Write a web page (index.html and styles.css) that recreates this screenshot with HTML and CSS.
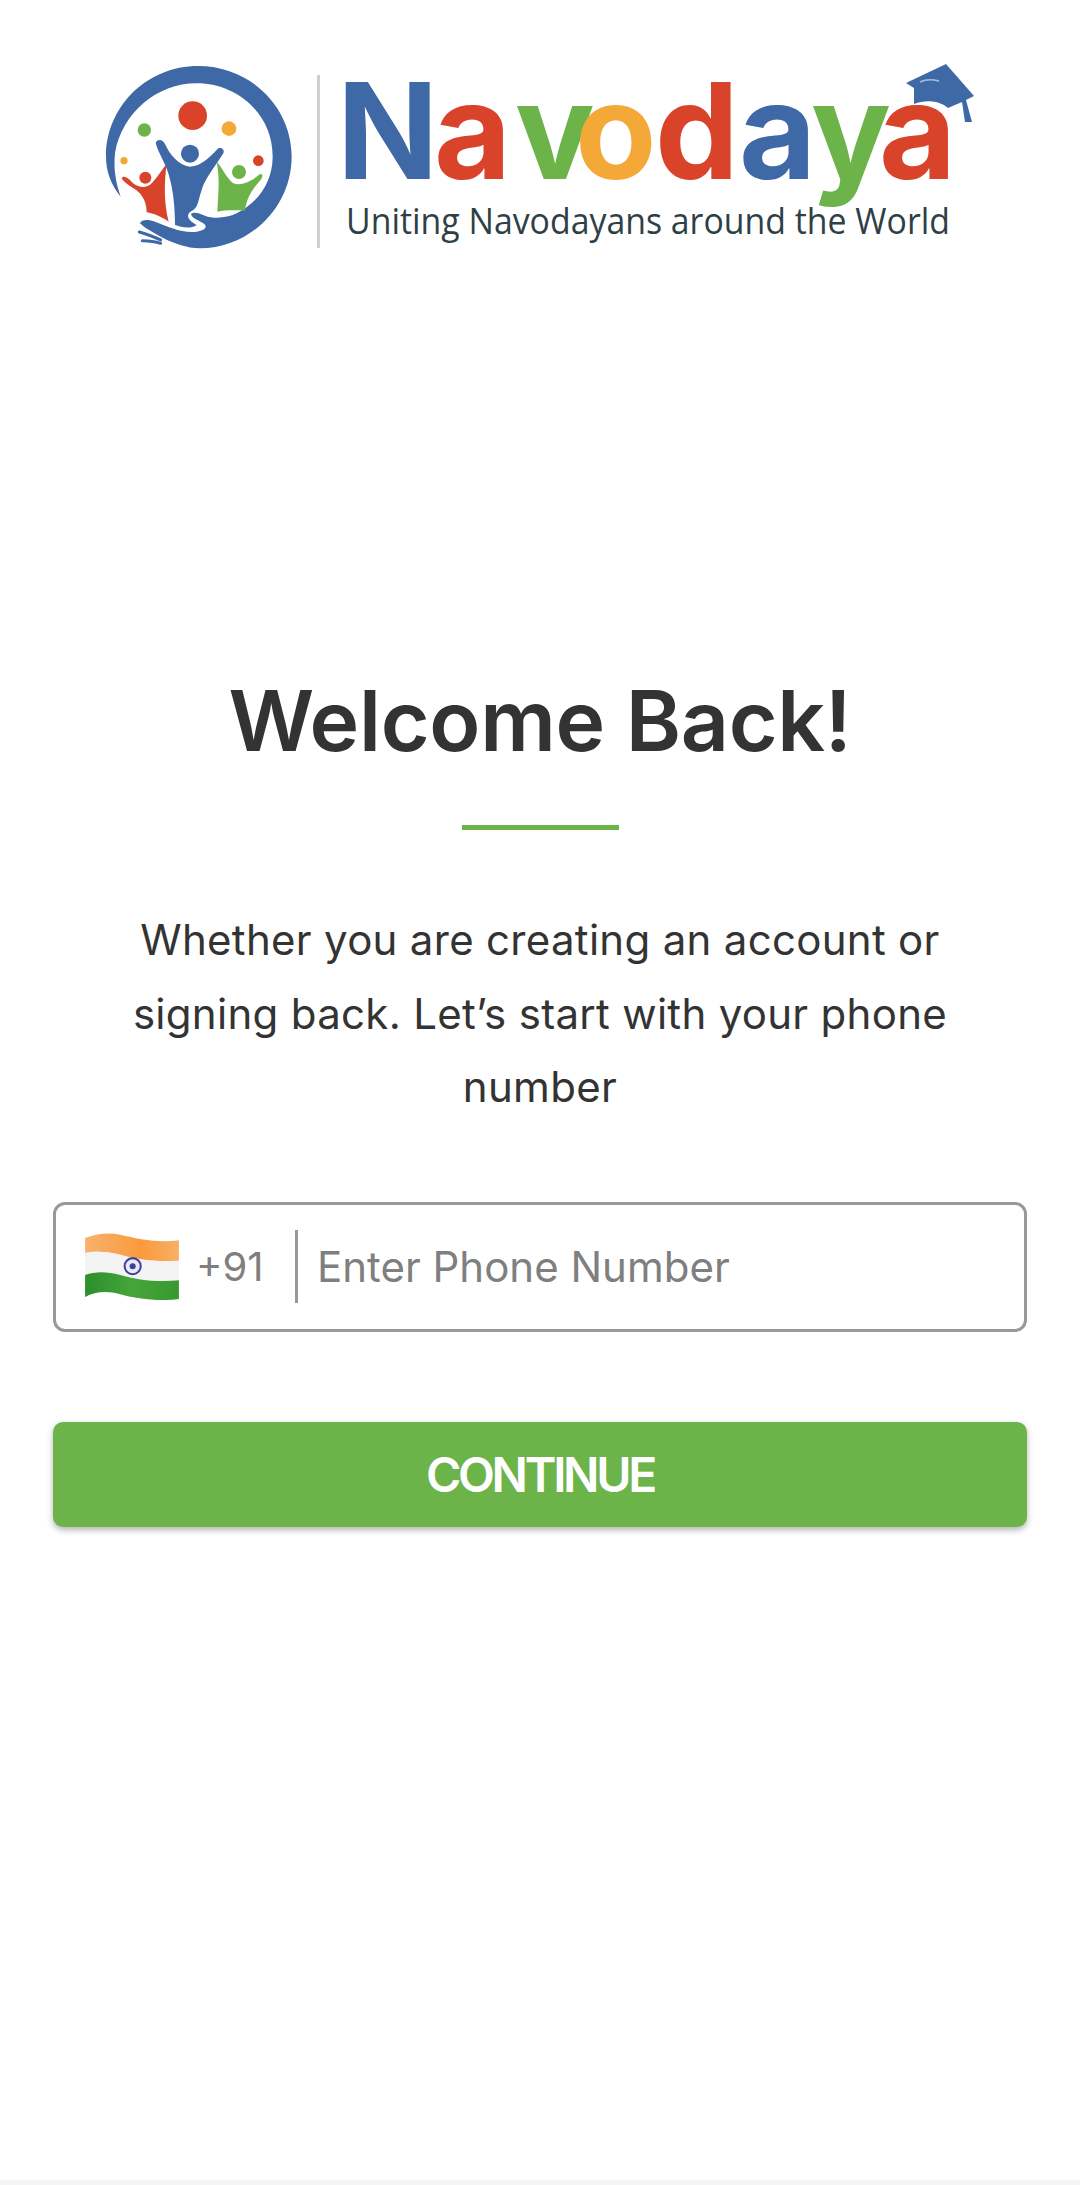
FILE: index.html
```html
<!DOCTYPE html>
<html lang="en">
<head>
    <meta charset="UTF-8">
    <meta name="viewport" content="width=device-width, initial-scale=1.0">
    <title>Navodaya - Welcome Back</title>
    <link rel="stylesheet" href="styles.css">
</head>
<body>

<div class="page">
    <svg class="logo" viewBox="90 50 900 210" role="img" aria-label="Navodaya logo">
        <!-- emblem, coordinates taken at 3x -->
        <g transform="translate(90 50) scale(0.3333)">
            <path fill="#3f68a6" d="M92 440C60 400 48 360 48 320C48 170 170 48 325 48C480 48 605 170 605 320C605 470 480 595 330 595C290 595 250 580 215 562C190 548 165 535 150 520C155 508 175 508 195 515C235 530 275 550 320 545C345 542 355 530 340 520C325 510 305 505 303 492C310 485 325 488 345 497C370 507 410 505 440 490C510 455 548 390 548 320C548 190 440 100 320 100C200 100 95 190 75 310C70 360 78 400 92 440Z"/>
            <path stroke="#3f68a6" stroke-width="9" stroke-linecap="round" fill="none" d="M148 546C170 552 190 560 212 570M157 572C175 572 195 574 212 580"/>
            <circle cx="308" cy="197" r="43" fill="#d8432a"/>
            <circle cx="163" cy="240" r="20" fill="#6cb34a"/>
            <circle cx="417" cy="236" r="22" fill="#f3a838"/>
            <circle cx="102" cy="332" r="11" fill="#f3a838"/>
            <circle cx="505" cy="332" r="16" fill="#d8432a"/>
            <circle cx="447" cy="366" r="21" fill="#6cb34a"/>
            <circle cx="166" cy="383" r="18" fill="#d8432a"/>
            <circle cx="300" cy="311" r="27" fill="#3f68a6"/>
            <path fill="#d8432a" d="M95 385C100 375 110 382 120 390C135 410 165 420 185 400C200 385 215 360 230 342C222 400 222 460 236 515C215 500 190 490 170 487C170 450 150 425 130 415C115 405 100 395 95 385Z"/>
            <path fill="#6cb34a" d="M380 335C395 350 410 385 430 400C455 410 490 390 510 372C520 370 520 382 510 392C490 415 470 440 465 482C435 480 405 480 382 485C385 430 390 385 380 335Z"/>
            <path fill="#3f68a6" d="M197 278C205 265 218 270 225 282C240 315 265 345 300 350C335 350 365 315 385 295C395 290 405 300 400 310C375 350 345 385 335 420C325 450 325 470 310 480C290 490 285 505 320 525C300 540 270 530 255 525C255 470 250 420 235 370C225 335 205 310 197 278Z"/>
        </g>
        <rect x="317" y="75" width="3" height="173" fill="#cfcfcf"/>
        <!-- wordmark -->
        <text class="logo-word" y="179">
            <tspan x="337" fill="#3f68a6">N</tspan><tspan x="434" fill="#d8432a">a</tspan><tspan x="515" fill="#6cb34a">v</tspan><tspan x="575" fill="#f3a838">o</tspan><tspan x="655" fill="#d8432a">d</tspan><tspan x="739" fill="#3f68a6">a</tspan><tspan x="811" fill="#6cb34a">y</tspan><tspan x="879" fill="#d8432a">a</tspan>
        </text>
        <text class="logo-tag" x="346" y="234" textLength="604" lengthAdjust="spacingAndGlyphs">Uniting Navodayans around the World</text>
        <!-- graduation cap -->
        <path fill="#3f68a6" d="M906 83L946 64L974 96L966 100L972 122L965 122L962 102L948 108C938 100 925 100 914 104L914 88Z"/>
        <path fill="none" stroke="#a9bedb" stroke-width="1.5" d="M920 82C926 79 932 79 939 81"/>
    </svg>

    <main class="welcome">
        <h1 class="welcome-title">Welcome Back!</h1>
        <div class="welcome-line"></div>
        <p class="welcome-text">Whether you are creating an account or signing back. Let’s start with your phone number</p>

        <form class="phone-form">
            <div class="phone-field">
                <svg class="flag" viewBox="135 125 280 200" aria-label="India flag">
                    <defs>
                        <linearGradient id="saffron" x1="0" x2="1" y1="0" y2="0">
                            <stop offset="0" stop-color="#f7b26c"/>
                            <stop offset="0.6" stop-color="#fb9a3c"/>
                            <stop offset="1" stop-color="#f8b066"/>
                        </linearGradient>
                        <linearGradient id="indgreen" x1="0" x2="1" y1="0" y2="0">
                            <stop offset="0" stop-color="#2c8f2c"/>
                            <stop offset="0.5" stop-color="#46a53a"/>
                            <stop offset="1" stop-color="#36992f"/>
                        </linearGradient>
                    </defs>
                    <path fill="url(#saffron)" d="M135 140C165 128 200 122 240 130C290 142 350 155 415 147L415 208C350 212 290 205 240 190C200 180 165 178 135 185Z"/>
                    <path fill="#f3f3f3" d="M135 185C165 178 200 180 240 190C290 205 350 212 415 208L415 266C350 272 290 265 240 250C200 240 165 240 135 250Z"/>
                    <path fill="url(#indgreen)" d="M135 250C165 240 200 240 240 250C290 265 350 272 415 266L415 322C350 330 290 322 240 308C200 297 165 300 135 316Z"/>
                    <circle cx="277" cy="224" r="24" fill="#ece9f7" stroke="#3d3f9c" stroke-width="6"/>
                    <circle cx="277" cy="224" r="9" fill="#3d3f9c"/>
                </svg>
                <span class="phone-code">+91</span>
                <input class="phone-input" type="text" placeholder="Enter Phone Number">
            </div>
            <button class="continue-btn" type="button">CONTINUE</button>
        </form>
    </main>

    <div class="bottom-strip"></div>
</div>

</body>
</html>
```

FILE: styles.css
```css
* {
    box-sizing: border-box;
}
body {
    margin: 0;
    background: #fff;
    font-family: Inter, "Open Sans", sans-serif;
    color: #333;
}
.page {
    display: flex;
    flex-direction: column;
    align-items: center;
    height: 2185px;
    overflow: hidden;
}
.logo {
    flex: none;
    width: 900px;
    height: 210px;
    margin-top: 50px;
}
.logo-word {
    font-family: Inter, sans-serif;
    font-size: 133px;
    font-weight: 700;
}
.logo-tag {
    font-family: "Open Sans", sans-serif;
    font-size: 36px;
    fill: #2f3f46;
}
.welcome {
    flex: 1;
    width: 100%;
    padding: 0 53px;
    display: flex;
    flex-direction: column;
    align-items: center;
}
.welcome-title {
    margin: 411px 0 0;
    font-size: 84px;
    line-height: 100px;
    font-weight: 600;
    letter-spacing: -0.3px;
    color: #333;
}
.welcome-line {
    width: 157px;
    height: 5px;
    margin-top: 54px;
    background: #6cb34a;
}
.welcome-text {
    width: 860px;
    margin: 73px 0 0;
    font-size: 42px;
    line-height: 73.5px;
    letter-spacing: 0.3px;
    text-align: center;
    color: #333;
}
.phone-form {
    width: 100%;
    margin-top: 78px;
}
.phone-field {
    display: flex;
    align-items: center;
    height: 130px;
    padding-left: 29px;
    border: 3px solid #999;
    border-radius: 12px;
}
.flag {
    flex: none;
    width: 94px;
    height: 67px;
}
.phone-code {
    width: 99px;
    margin-left: 17px;
    font-size: 40px;
    color: #7f7f7f;
}
.phone-input {
    flex: 1;
    min-width: 0;
    height: 73px;
    padding: 0 0 0 19px;
    border: none;
    border-left: 3px solid #999;
    border-radius: 0;
    outline: none;
    background: none;
    font-family: inherit;
    font-size: 42px;
    color: #7f7f7f;
}
.phone-input::placeholder {
    color: #7f7f7f;
    opacity: 1;
}
.continue-btn {
    display: block;
    width: 100%;
    height: 105px;
    margin-top: 90px;
    border: none;
    border-radius: 10px;
    background: #6cb34a;
    box-shadow: 0 3px 6px rgba(0, 0, 0, 0.3);
    font-family: inherit;
    font-size: 48px;
    font-weight: 600;
    letter-spacing: -3.3px;
    color: #fff;
}
.bottom-strip {
    flex: none;
    width: 100%;
    height: 5px;
    background: #f5f5f5;
}
```
